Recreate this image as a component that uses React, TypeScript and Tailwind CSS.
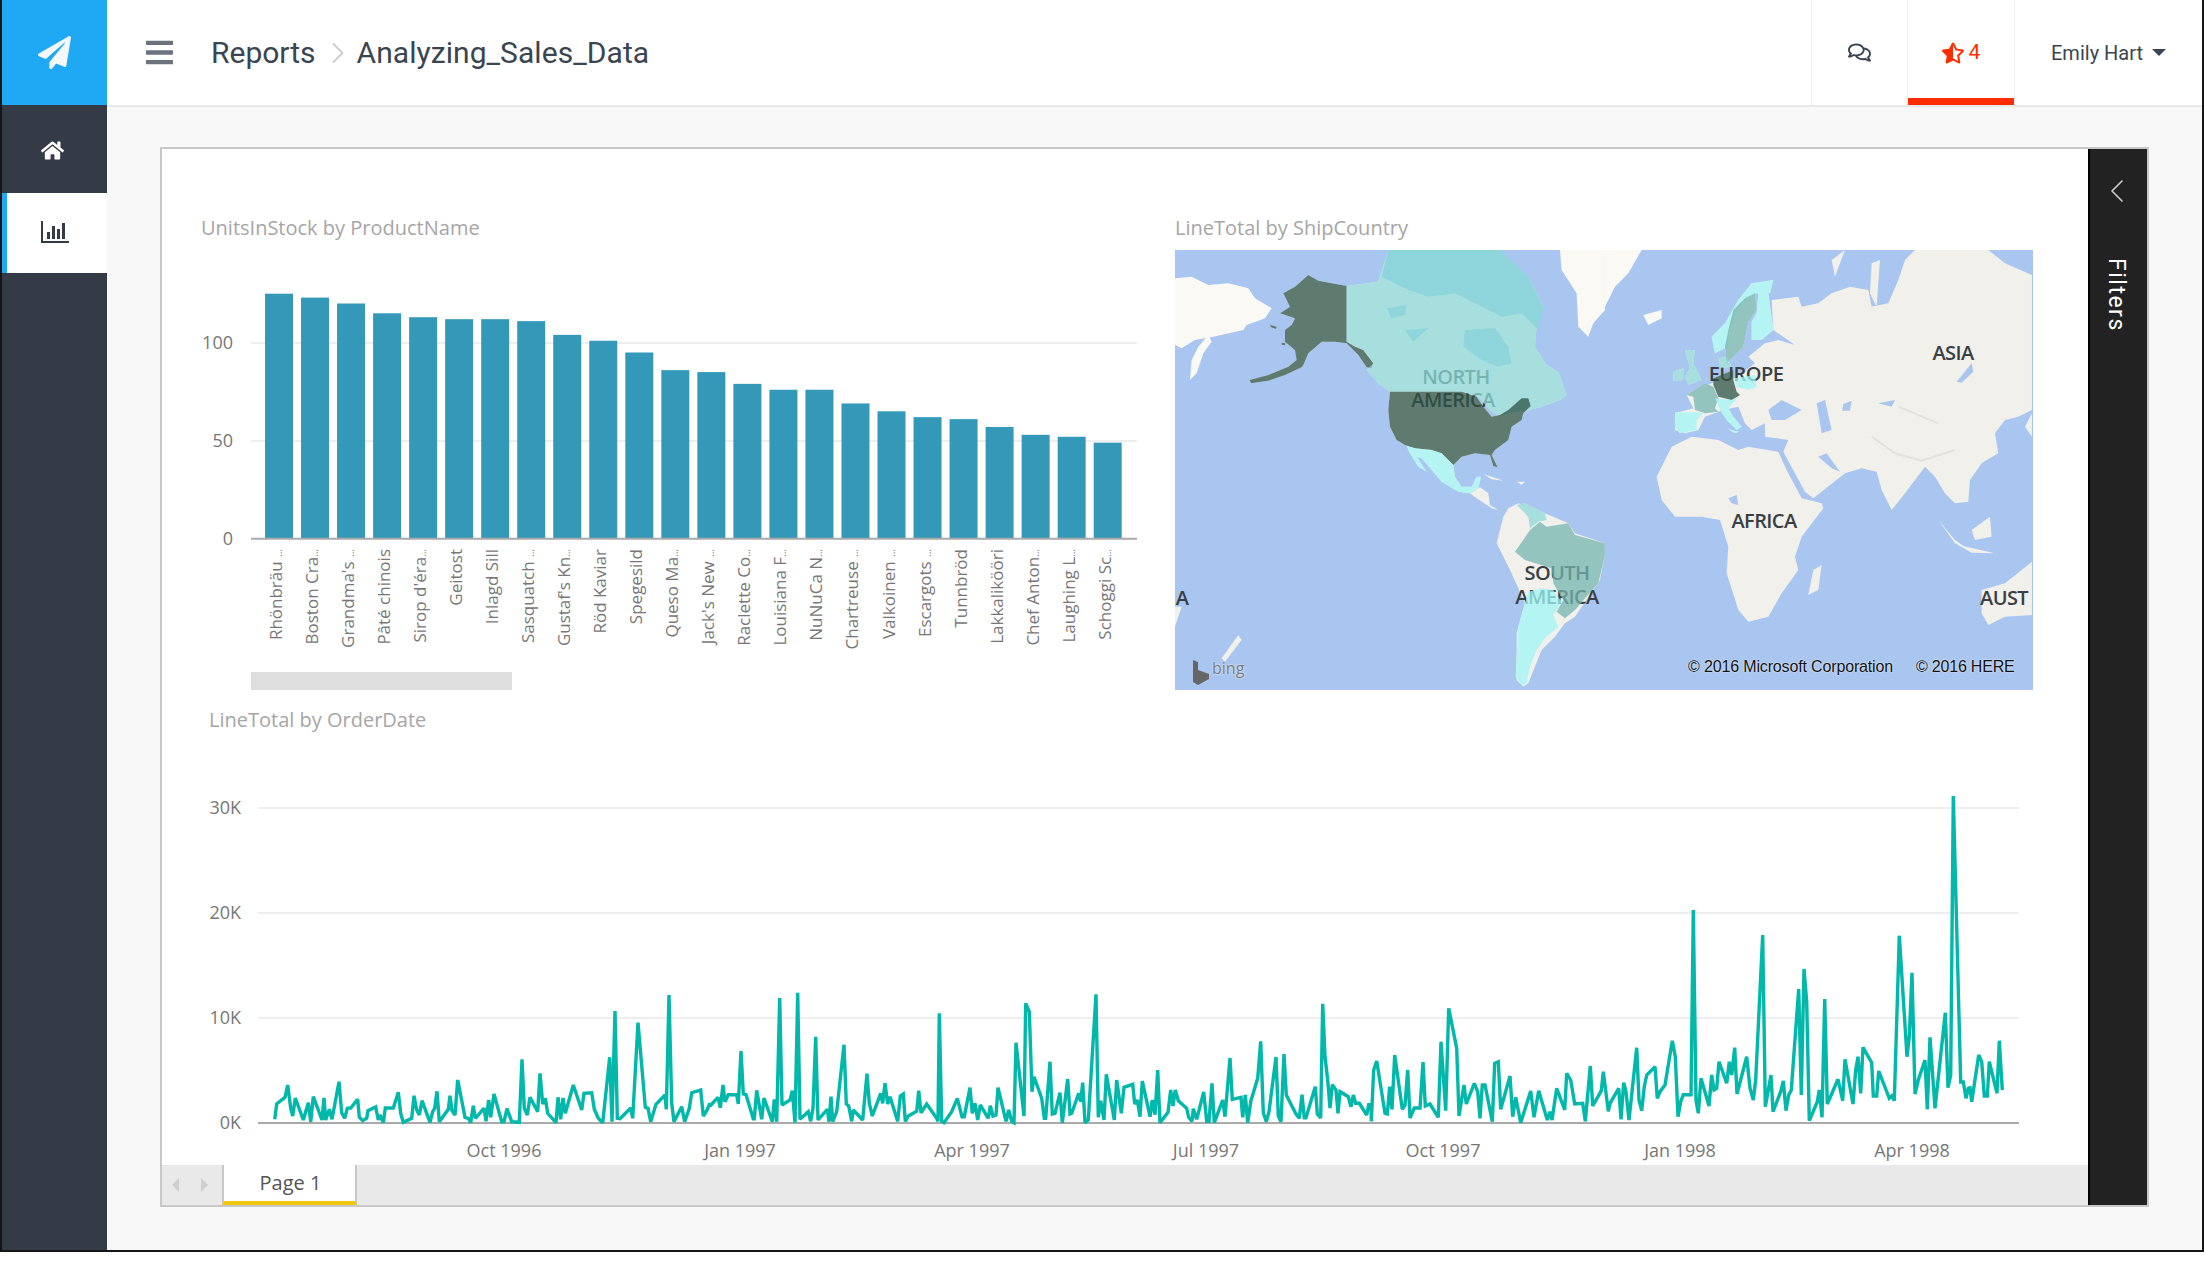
import React from "react";
import { ChevronLeft, ChevronRight } from "lucide-react";
import {
  FaBars,
  FaHome,
  FaPaperPlane,
  FaRegComments,
  FaStarHalfAlt,
} from "react-icons/fa";

const products = [
  ["Rhönbräu ...", 125],
  ["Boston Cra...", 123],
  ["Grandma's ...", 120],
  ["Pâté chinois", 115],
  ["Sirop d'éra...", 113],
  ["Geitost", 112],
  ["Inlagd Sill", 112],
  ["Sasquatch ...", 111],
  ["Gustaf's Kn...", 104],
  ["Röd Kaviar", 101],
  ["Spegesild", 95],
  ["Queso Ma...", 86],
  ["Jack's New ...", 85],
  ["Raclette Co...", 79],
  ["Louisiana F...", 76],
  ["NuNuCa N...", 76],
  ["Chartreuse ...", 69],
  ["Valkoinen ...", 65],
  ["Escargots ...", 62],
  ["Tunnbröd", 61],
  ["Lakkalikööri", 57],
  ["Chef Anton...", 53],
  ["Laughing L...", 52],
  ["Schoggi Sc...", 49],
] as const;

// traced at 3x, one string per crop: [origin x, origin y, points]
const lineSegments: [number, number, string][] = [
  [260, 980, "44,418 50,372 75,352 83,315 92,385 98,408 106,354 130,420 145,368 152,425 160,350 186,420 192,354 197,420 208,388 216,418 237,305 245,398 254,415 262,385 272,384 293,358 298,412 308,422 320,415 324,392 347,381 355,420 360,405 370,428 376,384 400,384 415,337 422,400 430,427 455,415 462,347 470,390 478,405 486,362 510,427 518,395 524,385 531,334 538,425 565,388 570,347 576,392 585,405 593,300 615,412 625,415 632,428 640,377 646,415 672,385 678,424 686,360 692,412 702,342 725,425 732,425 741,386 755,425 778,427 786,238 793,385 802,405 810,352 833,395 840,280 848,372 856,355 863,400 888,428 894,352 902,418 909,354 916,400 940,315 965,390 972,340 995,338 1003,388 1015,415 1028,428 1049,232 1056,425 1065,93 1072,415 1080,416 1112,384 1118,415 1134,128 1156,382 1164,385 1172,425 1188,373 1215,345 1219,388 1227,45 1235,370 1242,425 1265,380 1274,425 1288,385 1295,338 1322,330 1330,408 1340,392 1350,370"],
  [710, 980, "0,378 24,352 31,383 39,315 45,365 55,344 80,344 85,372 93,213 100,342 108,344 130,416 133,416 140,331 155,418 162,354 187,425 193,358 200,425 209,54 216,375 240,360 247,332 255,428 263,38 270,418 295,395 302,424 309,385 317,170 324,420 352,388 357,425 363,350 368,425 380,395 402,194 409,372 416,378 425,424 430,390 458,420 471,281 478,370 487,408 512,340 518,370 525,310 533,372 540,350 563,424 571,348 580,342 586,424 595,408 620,394 626,332 633,398 650,372 680,415 684,424 688,100 695,424 702,428 725,395 742,355 756,410 763,410 780,323 787,400 795,370 803,420 811,375 835,415 841,377 849,408 858,405 864,323 888,424 896,390 905,424 912,428 918,188 942,408 947,70 958,95 966,335 972,290 995,355 1003,415 1007,415 1020,245 1027,402 1035,400 1050,338 1057,428 1073,297 1080,402 1085,400 1106,340 1112,365 1118,308 1125,428 1135,420 1158,43 1165,412 1172,362 1182,420 1189,283 1213,420 1220,300 1234,400 1242,322 1268,313 1274,372 1282,360 1290,410 1297,303 1320,410 1327,360 1335,404 1343,270"],
  [1160, 980, "0,428 24,397 32,330 39,378 46,330 55,362 80,385 86,412 96,424 100,386 110,418 131,336 140,424 147,424 156,310 163,428 188,360 195,410 210,234 217,358 243,352 248,412 256,345 263,428 272,365 293,295 302,184 310,398 319,425 327,395 348,231 355,408 363,425 372,222 379,345 408,402 418,415 426,344 433,413 438,413 460,340 466,320 472,402 482,414 488,71 495,230 503,300 510,384 517,314 528,330 534,400 540,335 565,350 573,380 580,345 587,370 598,370 620,405 626,374 633,374 634,424 641,270 650,243 675,400 682,402 689,320 696,388 704,225 727,388 735,375 743,270 750,414 763,384 780,384 789,246 796,378 810,372 835,412 843,185 857,392 866,85 890,205 897,408 912,315 919,372 943,310 953,335 960,415 967,315 975,315 997,425 1004,250 1015,245 1022,388 1050,288 1058,410 1067,352 1082,428 1112,333 1122,412 1136,332 1162,420 1170,395 1176,420 1190,325 1214,390 1220,280 1232,300 1244,372 1268,370 1276,424 1291,258 1298,378 1324,332 1330,275 1345,394"],
  [1610, 790, "0,940 26,895 33,988 41,878 48,905 57,990 80,773 87,930 95,962 103,890 110,855 135,830 142,925 150,905 165,885 187,752 196,800 204,980 212,935 220,914 243,914 250,360 258,930 265,970 273,865 297,948 305,855 312,900 320,895 327,815 350,880 358,815 365,855 374,773 381,912 410,800 420,895 430,930 437,870 458,435 466,950 483,855 489,965 512,905 520,873 528,962 536,915 544,900 566,597 574,915 582,537 590,635 598,992 622,935 628,900 636,982 644,627 652,942 684,868 698,932 705,808 729,942 737,840 744,800 752,910 759,772 785,818 790,918 800,918 806,843 838,925 845,918 853,932 868,437 891,800 898,740 906,548 915,912 925,870 945,810 952,958 960,742 975,955 1006,668 1014,893 1022,855 1030,18 1052,876 1060,876 1068,925 1075,895 1080,893 1085,935 1106,795 1115,815 1123,918 1132,918 1138,815 1161,910 1168,752 1177,900"],
];

const linePoints = lineSegments
  .map(([ox, oy, pts]) =>
    pts
      .split(" ")
      .map((p) => {
        const [x, y] = p.split(",").map(Number);
        return `${(ox + x / 3).toFixed(1)},${(oy + y / 3).toFixed(1)}`;
      })
      .join(" "),
  )
  .join(" ");

const US = "#2e5345";
const CANADA = "#8cdad8";
const CYAN = "#9ff7f5";
const BRAZIL = "#73b5ad";

// countries with data, coordinates in the 3x crop of each half of the map
const shapesWest: [string, string][] = [
  ["400,75 430,92 515,108 515,275 540,290 565,300 595,340 590,355 575,352 550,315 515,280 480,275 440,275 400,310 385,345 380,352 330,375 280,392 228,400 224,390 280,375 340,350 365,330 360,300 330,275 330,240 350,225 360,205 315,190 345,170 325,130 360,110", US],
  ["285,224 305,230 303,237 288,232", US],
  ["320,278 332,280 330,286 320,284", US],
  ["515,108 610,95 640,0 975,0 1000,30 1060,80 1105,170 1085,230 1080,290 1115,345 1150,365 1175,435 1155,450 1100,470 1065,480 1000,490 975,500 945,480 910,440 860,425 645,425 610,400 575,360 595,340 565,300 515,275", CANADA],
  ["645,425 860,425 905,440 925,470 950,500 975,495 1000,480 1040,445 1060,445 1067,468 1045,490 1040,510 1010,530 1000,570 960,600 950,615 968,652 955,648 945,615 900,610 860,620 835,645 800,610 770,600 720,595 690,585 665,570 645,530 640,480", US],
  ["695,588 720,595 770,600 800,610 835,645 840,680 860,710 890,710 905,680 918,680 910,715 885,730 850,725 800,695 770,660 740,625 725,620 755,665 730,650 705,610", CYAN],
  ["1065,840 1095,815 1115,830 1180,820 1200,855 1290,880 1290,915 1270,1000 1200,1080 1170,1105 1145,1085 1165,1050 1135,1000 1130,955 1050,930 1020,905 1045,870", BRAZIL],
  ["1025,765 1050,760 1110,790 1115,810 1090,815 1065,835 1060,800", CANADA],
  ["1060,1025 1100,1015 1135,1020 1160,1055 1135,1095 1150,1130 1110,1165 1085,1200 1065,1250 1055,1300 1040,1305 1022,1280 1030,1130", CYAN],
];

const shapesEast: [string, string][] = [
  ["320,260 360,220 400,150 440,100 505,90 495,130 450,130 400,170 370,250 370,290 330,310", CYAN],
  ["370,240 385,180 420,145 450,130 455,180 430,215 415,290 365,340 360,290", BRAZIL],
  ["460,130 490,130 505,240 470,270 440,270 440,215 455,190", CYAN],
  ["340,325 365,320 380,350 345,355", CANADA],
  ["240,300 270,300 265,340 290,390 250,405 240,380 255,355", CANADA],
  ["205,365 235,355 235,390 205,392", CANADA],
  ["325,385 385,360 385,390 395,425 405,435 380,450 340,440 325,405", US],
  ["390,385 450,375 455,410 430,420 395,410", CYAN],
  ["300,400 325,410 340,445 330,475 340,485 300,490 270,480 265,440 245,435", BRAZIL],
  ["212,487 265,487 295,490 275,510 275,540 225,550 210,530", CYAN],
  ["330,445 380,450 400,440 370,475 385,500 410,530 395,540 365,510 345,480", CYAN],
  ["370,538 402,545 390,550", CYAN],
];

const snowWest = [
  "0,85 50,80 100,105 160,100 220,115 240,145 290,175 270,205 215,225 205,240 115,260 60,270 20,295 0,285",
  "100,255 70,290 50,330 45,390 65,370 85,310 110,275",
  "1155,0 1290,0 1290,180 1255,220 1240,260 1210,230 1205,130 1160,60",
];

const landWest = [
  "885,730 915,712 940,730 945,765 970,780 950,775 905,745",
  "1000,775 1030,760 1110,790 1180,820 1200,850 1290,880 1290,910 1275,990 1200,1100 1170,1120 1140,1160 1100,1200 1060,1300 1045,1310 1025,1290 1025,1150 1050,1060 1010,970 965,880 985,800",
  "0,1070 20,1070 0,1130",
  "140,1225 190,1155 200,1170 150,1235",
  "925,672 950,680 985,692 950,688",
  "1025,695 1050,695 1040,705",
];

const snowEast = [
  "0,0 110,0 70,70 30,110 0,170",
  "115,195 170,180 170,205 130,225",
];

const landEast = [
  "500,150 580,140 590,170 640,160 680,130 735,110 790,120 800,170 850,160 880,90 900,30 930,0 1150,0 1200,40 1281,75 1281,480 1240,500 1200,510 1170,550 1180,610 1130,640 1095,690 1090,755 1050,760 1020,730 990,680 960,650 900,730 860,780 830,720 815,665 770,655 720,670 625,745 600,725 535,605 550,570 480,560 480,520 440,540 420,520 400,470 355,480 300,500 280,540 240,550 210,540 210,490 265,475 245,435 320,400 345,390 390,385 450,340 430,320 480,280 520,270 570,285 505,240",
  "155,680 200,590 260,560 340,570 400,600 430,590 520,605 545,660 590,745 650,760 655,775 590,860 570,920 580,960 530,1030 490,1100 430,1115 400,1080 365,970 370,890 345,810 290,800 210,800 170,750",
  "625,960 650,945 640,1020 610,1035",
  "1000,810 1050,870 1100,905 1050,880",
  "1060,885 1170,910 1100,908",
  "1100,840 1155,800 1160,860 1110,870",
  "1130,1020 1200,1000 1281,935 1281,1095 1200,1100 1150,1125 1130,1090",
  "680,30 720,0 690,80",
  "800,40 825,30 815,170 795,130",
  "1260,530 1281,490 1281,560",
];

const waterEast = [
  "490,480 530,450 590,480 540,510 500,510",
  "635,460 660,450 680,540 650,550",
  "640,620 665,610 705,665 680,655",
  "1055,395 1100,340 1105,365 1070,398",
  "715,462 740,452 735,482 712,482",
  "820,460 870,450 860,470",
  "370,745 395,735 400,765 380,760",
];

const MapLabel = ({
  x,
  y,
  children,
}: {
  x: number;
  y: number;
  children: React.ReactNode;
}) => (
  <span
    className="absolute -translate-x-1/2 -translate-y-1/2 whitespace-nowrap text-[20px] leading-none font-semibold tracking-[-0.6px] text-[#3a3f44] font-['Open_Sans',sans-serif]"
    style={{ left: x, top: y }}
  >
    {children}
  </span>
);

const WorldMap = () => (
  <div className="relative w-[858px] h-[440px] overflow-hidden bg-[#a9c6f0]">
    <svg viewBox="0 0 858 440" className="absolute inset-0 w-full h-full blur-[0.5px]">
      <g transform="scale(0.3333)">
        <g fill="#faf9f3">
          {snowWest.map((p) => (
            <polygon key={p} points={p} />
          ))}
        </g>
        <g fill="#f2f0ea">
          {landWest.map((p) => (
            <polygon key={p} points={p} />
          ))}
          {shapesWest.map(([p]) => (
            <polygon key={p} points={p} />
          ))}
        </g>
      </g>
      <g transform="translate(430 0) scale(0.3333)">
        <g fill="#faf9f3">
          {snowEast.map((p) => (
            <polygon key={p} points={p} />
          ))}
        </g>
        <g fill="#f2f0ea">
          {landEast.map((p) => (
            <polygon key={p} points={p} />
          ))}
          {shapesEast.map(([p]) => (
            <polygon key={p} points={p} />
          ))}
        </g>
        <g fill="#a9c6f0">
          {waterEast.map((p) => (
            <polygon key={p} points={p} />
          ))}
        </g>
        <path
          d="M800 560 L870 610 L950 632 L1050 600 M880 470 L1000 520"
          fill="none"
          stroke="#e4e2da"
          strokeWidth="6"
        />
      </g>
    </svg>

    {/* labels sit under the tinted countries, as in a Bing map */}
    <MapLabel x={281} y={127}>NORTH</MapLabel>
    <MapLabel x={278} y={150}>AMERICA</MapLabel>
    <MapLabel x={382} y={323}>SOUTH</MapLabel>
    <MapLabel x={382} y={347}>AMERICA</MapLabel>
    <MapLabel x={571} y={124}>EUROPE</MapLabel>
    <MapLabel x={778} y={103}>ASIA</MapLabel>
    <MapLabel x={589} y={271}>AFRICA</MapLabel>
    <MapLabel x={829} y={348}>AUST</MapLabel>
    <MapLabel x={7} y={348}>A</MapLabel>

    <svg viewBox="0 0 858 440" className="absolute inset-0 w-full h-full blur-[0.5px]">
      <g transform="scale(0.3333)" fillOpacity="0.75">
        {shapesWest.map(([p, c]) => (
          <polygon key={p} points={p} fill={c} />
        ))}
      </g>
      <g transform="scale(0.3333)" fill="#8fd5dc">
        <polygon points="620,80 640,0 975,0 1060,80 1105,170 1090,240 1040,190 980,200 900,160 840,130 760,140 700,120" />
        <polygon points="870,240 960,235 1000,290 1010,340 970,350 920,330 865,290" />
        <polygon points="635,175 695,165 690,195 650,205" />
        <polygon points="690,240 760,235 715,275" />
      </g>
      <g transform="translate(430 0) scale(0.3333)" fillOpacity="0.75">
        {shapesEast.map(([p, c]) => (
          <polygon key={p} points={p} fill={c} />
        ))}
      </g>
      <g transform="translate(18 410)" fill="#666">
        <path d="M0 0 L5 2 L5 10 L16 14 L16 19 L5 25 L0 22 Z" />
      </g>
    </svg>

    <span className="absolute left-[37px] top-[408px] text-[16px] leading-5 text-[#7b7b7b] font-['Open_Sans',sans-serif] [text-shadow:0_0_2px_white]">
      bing
    </span>
    <span className="absolute left-[513px] top-[407px] whitespace-nowrap text-[16px] leading-5 tracking-[-0.15px] text-[#111] font-['Liberation_Sans',sans-serif] [text-shadow:0_0_2px_white]">
      © 2016 Microsoft Corporation
    </span>
    <span className="absolute left-[741px] top-[407px] whitespace-nowrap text-[16px] leading-5 tracking-[-0.2px] text-[#111] font-['Liberation_Sans',sans-serif] [text-shadow:0_0_2px_white]">
      © 2016 HERE
    </span>
  </div>
);

const BarChart = () => (
  <svg
    viewBox="162 250 1013 446"
    className="w-[1013px] h-[446px] font-['Open_Sans',sans-serif]"
  >
    <line x1="251" x2="1137" y1="343" y2="343" stroke="#eeeeee" strokeWidth="2" />
    <line x1="251" x2="1137" y1="441" y2="441" stroke="#eeeeee" strokeWidth="2" />
    {[
      ["100", 343],
      ["50", 441],
      ["0", 539],
    ].map(([t, y]) => (
      <text
        key={t}
        x="233"
        y={Number(y) + 6}
        textAnchor="end"
        fontSize="18"
        fill="#777777"
      >
        {t}
      </text>
    ))}
    {products.map(([name, value], i) => {
      const x = 265 + i * 36.03;
      const top = 538.7 - value * 1.96;
      const cut = name.endsWith("...");
      return (
        <g key={name}>
          <rect x={x} y={top} width="28" height={538.7 - top} fill="#3498b8" />
          <text
            transform={`translate(${x + 17} 549) rotate(-90)`}
            textAnchor="end"
            fontSize="17"
            fill="#777777"
          >
            {cut ? name.slice(0, -3) : name}
            {cut && <tspan fontSize="10">...</tspan>}
          </text>
        </g>
      );
    })}
    <line x1="251" x2="1137" y1="538.7" y2="538.7" stroke="#aaaaaa" strokeWidth="2" />
    <rect x="251" y="672" width="261" height="18" fill="#dedede" />
  </svg>
);

const LineChart = () => (
  <svg
    viewBox="162 744 1926 421"
    className="w-[1926px] h-[421px] font-['Open_Sans',sans-serif]"
  >
    {[
      ["30K", 808],
      ["20K", 913],
      ["10K", 1018],
    ].map(([t, y]) => (
      <line
        key={t}
        x1="258"
        x2="2019"
        y1={y}
        y2={y}
        stroke="#eeeeee"
        strokeWidth="2"
      />
    ))}
    <line x1="258" x2="2019" y1="1123" y2="1123" stroke="#aaaaaa" strokeWidth="2" />
    {[
      ["30K", 808],
      ["20K", 913],
      ["10K", 1018],
      ["0K", 1123],
    ].map(([t, y]) => (
      <text
        key={t}
        x="241"
        y={Number(y) + 6}
        textAnchor="end"
        fontSize="18"
        fill="#777777"
      >
        {t}
      </text>
    ))}
    {[
      ["Oct 1996", 504],
      ["Jan 1997", 740],
      ["Apr 1997", 972],
      ["Jul 1997", 1206],
      ["Oct 1997", 1443],
      ["Jan 1998", 1680],
      ["Apr 1998", 1912],
    ].map(([t, x]) => (
      <text key={t} x={x} y="1157" textAnchor="middle" fontSize="18" fill="#777777">
        {t}
      </text>
    ))}
    <polyline
      points={linePoints}
      fill="none"
      stroke="#01b8aa"
      strokeWidth="3.4"
      strokeLinejoin="miter"
      strokeMiterlimit="2"
    />
  </svg>
);

const ChartBarsIcon = () => (
  <svg width="28" height="22" viewBox="0 0 28 22" fill="#343b46">
    <rect x="0" y="0" width="2" height="22" />
    <rect x="0" y="20" width="28" height="2" />
    <rect x="6" y="11" width="3" height="7" />
    <rect x="11" y="5" width="3" height="13" />
    <rect x="16" y="8" width="3" height="10" />
    <rect x="21" y="2" width="3" height="16" />
  </svg>
);

export default function App() {
  return (
    <div className="w-[2204px] h-[1274px] bg-white overflow-hidden">
      <div className="h-[1252px] flex border-x-2 border-b-2 border-[#151515]">
        {/* sidebar */}
        <div className="w-[105px] shrink-0 flex flex-col bg-[#343b46]">
          <div className="h-[105px] flex items-center justify-center bg-[#1fa8f3]">
            <FaPaperPlane size={33} color="#f5f8fb" />
          </div>
          <div className="h-[88px] pt-[3px] pr-[4px] flex items-center justify-center">
            <FaHome size={23} color="#ffffff" />
          </div>
          <div className="h-[80px] pr-[5px] pb-[2px] flex items-center justify-center bg-white border-l-[5px] border-[#1fa8f3]">
            <ChartBarsIcon />
          </div>
        </div>

        <div className="flex-1 flex flex-col bg-[#f8f8f8]">
          {/* header */}
          <div className="h-[107px] flex bg-white border-b-2 border-[#e8e8e8] font-['Roboto',sans-serif] text-[#3a4552]">
            <div className="flex-1 flex items-center">
              <FaBars size={31} color="#6b737f" className="ml-[37px]" />
              <span className="ml-[36px] text-[30px]">Reports</span>
              <ChevronRight
                size={36}
                color="#cccccc"
                strokeWidth={1.2}
                className="ml-[4px] mr-[1px]"
              />
              <span className="text-[30px] tracking-[0.05px]">Analyzing_Sales_Data</span>
            </div>
            <div className="w-[96px] flex items-center justify-center border-l border-[#f3f3f3]">
              <FaRegComments size={23} color="#3a4552" />
            </div>
            <div className="relative w-[108px] flex items-center justify-center gap-[5px] border-x border-[#f3f3f3] text-[#ff2d00] text-[21px]">
              <FaStarHalfAlt size={22} color="#ff2d00" />
              <span className="pt-[1px]">4</span>
              <div className="absolute left-0 right-0 bottom-0 h-[7px] bg-[#ff2d00]" />
            </div>
            <div className="w-[187px] flex items-center pl-[36px] gap-[9px] text-[20px]">
              <span>Emily Hart</span>
              <div className="w-0 h-0 border-x-[7px] border-t-[7px] border-x-transparent border-t-[#3a4552]" />
            </div>
          </div>

          {/* report */}
          <div className="px-[53px] pt-[40px]">
            <div className="h-[1060px] flex border-2 border-[#c8c8c8] bg-white">
              <div className="w-[1926px] flex flex-col">
                <div className="flex pt-[67px]">
                  <div className="w-[1013px]">
                    <div className="h-[34px] pl-[39px] text-[20px] leading-6 text-[#a6a6a6] font-['Open_Sans',sans-serif]">
                      UnitsInStock by ProductName
                    </div>
                    <BarChart />
                  </div>
                  <div>
                    <div className="h-[34px] text-[20px] leading-6 text-[#a6a6a6] font-['Open_Sans',sans-serif]">
                      LineTotal by ShipCountry
                    </div>
                    <WorldMap />
                  </div>
                </div>
                <div className="h-[48px] flex items-center pl-[47px] text-[20px] text-[#a6a6a6] font-['Open_Sans',sans-serif]">
                  LineTotal by OrderDate
                </div>
                <LineChart />

                {/* page tabs */}
                <div className="h-[40px] flex bg-[#e9e9e9]">
                  <div className="w-[60px] pr-[5px] flex items-center justify-center gap-[22px]">
                    <div className="w-0 h-0 border-y-[7px] border-r-[7px] border-y-transparent border-r-[#cfcfcf]" />
                    <div className="w-0 h-0 border-y-[7px] border-l-[7px] border-y-transparent border-l-[#cfcfcf]" />
                  </div>
                  <div className="w-[135px] pl-[2px] flex items-center justify-center bg-white border-x-2 border-[#c8c8c8] border-b-4 border-b-[#f2c80f] text-[20px] text-[#555555] font-['Open_Sans',sans-serif]">
                    Page 1
                  </div>
                </div>
              </div>

              <div className="w-[59px] shrink-0 flex flex-col items-center pt-[22px] pr-[4px] bg-[#222222] border-l-2 border-black">
                <ChevronLeft size={40} color="#cccccc" strokeWidth={1} />
                <span className="mt-[47px] text-[23px] leading-none tracking-[1.5px] text-white font-['Roboto',sans-serif] [writing-mode:vertical-rl]">
                  Filters
                </span>
              </div>
            </div>
          </div>
        </div>
      </div>
    </div>
  );
}
